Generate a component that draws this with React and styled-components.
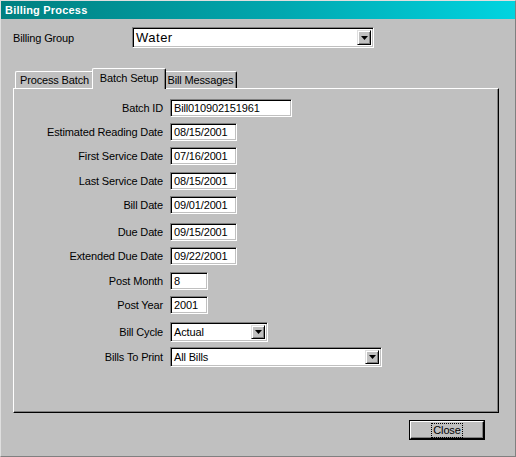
import React from "react";
import styled, { createGlobalStyle, css } from "styled-components";

const GlobalStyle = createGlobalStyle`
  html, body {
    margin: 0;
    padding: 0;
    background: #c0c0c0;
  }
  * {
    box-sizing: border-box;
  }
`;

const sunken = css`
  border-top: 1px solid #808080;
  border-left: 1px solid #808080;
  border-bottom: 1px solid #ffffff;
  border-right: 1px solid #ffffff;
  box-shadow: inset 1px 1px 0 #000000, inset -1px -1px 0 #c0c0c0;
`;

const raised = css`
  border-top: 1px solid #dfdfdf;
  border-left: 1px solid #dfdfdf;
  border-bottom: 1px solid #000000;
  border-right: 1px solid #000000;
  box-shadow: inset 1px 1px 0 #ffffff, inset -1px -1px 0 #808080;
`;

const Window = styled.div`
  width: 516px;
  height: 457px;
  display: flex;
  flex-direction: column;
  background: #c0c0c0;
  border-top: 1px solid #dfdfdf;
  border-left: 1px solid #dfdfdf;
  border-right: 1px solid #808080;
  border-bottom: 1px solid #808080;
  font-family: "Liberation Sans", Arial, sans-serif;
  font-size: 11px;
  letter-spacing: -0.15px;
  color: #000;
`;

const TitleBar = styled.div`
  height: 18px;
  display: flex;
  align-items: center;
  padding-left: 4px;
  background: linear-gradient(to right, #008080 0%, #00a8b0 55%, #00d4e0 100%);
  color: #fff;
  font-weight: bold;
  font-size: 11px;
  letter-spacing: 0.2px;
`;

const Body = styled.div`
  flex: 1;
  display: flex;
  flex-direction: column;
  padding: 8px 16px 0 12px;
`;

const GroupRow = styled.div`
  display: grid;
  grid-template-columns: 119px auto;
  align-items: center;
  height: 21px;
`;

const GroupLabel = styled.span`
  padding-left: 0;
`;

const Select = styled.div`
  ${sunken};
  width: ${(p) => p.$width}px;
  height: ${(p) => p.$height}px;
  background: #fff;
  display: flex;
  align-items: center;
  justify-content: space-between;
  padding: 2px 2px 2px 3px;
`;

const SelectText = styled.span`
  font-size: ${(p) => (p.$large ? "13px" : "11px")};
  letter-spacing: ${(p) => (p.$large ? "0.5px" : "-0.15px")};
  white-space: nowrap;
`;

const ArrowButton = styled.div`
  ${raised};
  width: 14px;
  height: 100%;
  background: #c0c0c0;
  display: flex;
  align-items: center;
  justify-content: center;
`;

const TabStrip = styled.div`
  display: flex;
  align-items: flex-end;
  height: 20px;
  margin-top: 20px;
  padding-left: 2px;
`;

const Tab = styled.div`
  position: relative;
  width: ${(p) => (p.$active ? p.$width + 4 : p.$width)}px;
  height: ${(p) => (p.$active ? 21 : 17)}px;
  margin: ${(p) => (p.$active ? "0 -2px -1px" : "0")};
  z-index: ${(p) => (p.$active ? 2 : 1)};
  background: #c0c0c0;
  border-top: 1px solid #ffffff;
  border-left: 1px solid #ffffff;
  border-right: 1px solid #000000;
  border-top-left-radius: 2px;
  border-top-right-radius: 2px;
  box-shadow: inset -1px 0 0 #808080;
  display: flex;
  align-items: ${(p) => (p.$active ? "flex-start" : "center")};
  justify-content: center;
  padding-top: ${(p) => (p.$active ? "3px" : "0")};
  white-space: nowrap;
`;

const Panel = styled.div`
  width: 486px;
  height: 325px;
  border-top: 1px solid #ffffff;
  border-left: 1px solid #ffffff;
  border-right: 1px solid #000000;
  border-bottom: 1px solid #000000;
  box-shadow: inset -1px -1px 0 #808080;
  padding-top: 10px;
  display: flex;
  flex-direction: column;
`;

const FieldRow = styled.div`
  display: grid;
  grid-template-columns: 149px auto;
  column-gap: 7px;
  align-items: center;
  margin-top: ${(p) => p.$gap || 0}px;
`;

const Label = styled.span`
  text-align: right;
  white-space: nowrap;
`;

const Input = styled.div`
  ${sunken};
  width: ${(p) => p.$width}px;
  height: 18px;
  background: #fff;
  display: flex;
  align-items: center;
  padding-left: 3px;
  white-space: nowrap;
`;

const Footer = styled.div`
  display: flex;
  justify-content: flex-end;
  padding: 7px 14px 0 0;
`;

const Button = styled.div`
  width: 76px;
  height: 20px;
  border: 1px solid #000;
  display: flex;
`;

const ButtonFace = styled.div`
  ${raised};
  border-top-color: #ffffff;
  border-left-color: #ffffff;
  box-shadow: inset -1px -1px 0 #808080;
  flex: 1;
  display: flex;
  align-items: center;
  justify-content: center;
`;

const FocusRing = styled.span`
  border: 1px dotted #000;
  padding: 0 1px;
  line-height: 13px;
`;

const Arrow = () => (
  <ArrowButton>
    <svg width="7" height="4" viewBox="0 0 7 4">
      <path d="M0 0H7L3.5 4Z" fill="#000" />
    </svg>
  </ArrowButton>
);

const fields = [
  { label: "Batch ID", value: "Bill010902151961", width: 122, gap: 0 },
  { label: "Estimated Reading Date", value: "08/15/2001", width: 67, gap: 6 },
  { label: "First Service Date", value: "07/16/2001", width: 67, gap: 6 },
  { label: "Last Service Date", value: "08/15/2001", width: 67, gap: 7 },
  { label: "Bill Date", value: "09/01/2001", width: 67, gap: 6 },
  { label: "Due Date", value: "09/15/2001", width: 67, gap: 9 },
  { label: "Extended Due Date", value: "09/22/2001", width: 67, gap: 6 },
  { label: "Post Month", value: "8", width: 38, gap: 7 },
  { label: "Post Year", value: "2001", width: 38, gap: 6 },
];

const tabs = [
  { name: "Process Batch", width: 79 },
  { name: "Batch Setup", width: 70, active: true },
  { name: "Bill Messages", width: 73 },
];

export default function App() {
  return (
    <>
      <GlobalStyle />
      <Window>
        <TitleBar>Billing Process</TitleBar>
        <Body>
          <GroupRow>
            <GroupLabel>Billing Group</GroupLabel>
            <Select $width={242} $height={21}>
              <SelectText $large>Water</SelectText>
              <Arrow />
            </Select>
          </GroupRow>

          <TabStrip>
            {tabs.map((t) => (
              <Tab key={t.name} $width={t.width} $active={t.active}>
                {t.name}
              </Tab>
            ))}
          </TabStrip>

          <Panel>
            {fields.map((f) => (
              <FieldRow key={f.label} $gap={f.gap}>
                <Label>{f.label}</Label>
                <Input $width={f.width}>{f.value}</Input>
              </FieldRow>
            ))}
            <FieldRow $gap={8}>
              <Label>Bill Cycle</Label>
              <Select $width={98} $height={20}>
                <SelectText>Actual</SelectText>
                <Arrow />
              </Select>
            </FieldRow>
            <FieldRow $gap={5}>
              <Label>Bills To Print</Label>
              <Select $width={212} $height={20}>
                <SelectText>All Bills</SelectText>
                <Arrow />
              </Select>
            </FieldRow>
          </Panel>

          <Footer>
            <Button>
              <ButtonFace>
                <FocusRing>Close</FocusRing>
              </ButtonFace>
            </Button>
          </Footer>
        </Body>
      </Window>
    </>
  );
}
